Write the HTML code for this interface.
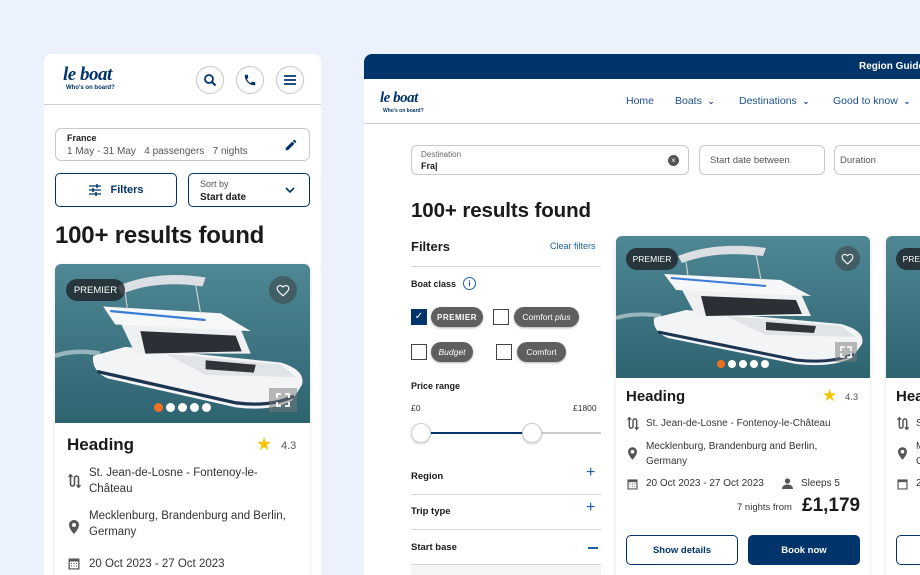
<!DOCTYPE html>
<html><head><meta charset="utf-8"><style>
*{box-sizing:border-box;margin:0;padding:0}
body{width:920px;height:575px;overflow:hidden;background:#ebf1fd;font-family:"Liberation Sans",sans-serif;color:#1a1a1a;position:relative}
.a{position:absolute}
.logo{font-family:"Liberation Serif",serif;font-style:italic;font-weight:bold;color:#00346b;letter-spacing:-0.5px}
.sub{font-size:6px;font-weight:bold;color:#00346b}
.circ{width:28px;height:28px;border:1px solid #c8c8c8;border-radius:50%;display:flex;align-items:center;justify-content:center}
.box{border:1px solid #c9c9c9;border-radius:6px;background:#fff}
.btn{border:1.2px solid #00346b;border-radius:5px}
.pill{background:#5f5f5f;color:#fff;border-radius:12px;font-size:9px;display:flex;align-items:center;justify-content:center;height:20px;box-shadow:0 1px 2px rgba(0,0,0,.3)}
.cb{width:16px;height:16px;border:1.2px solid #444;background:#fff}
.row{font-size:11px;color:#333;line-height:16px}
.hr{height:1px;background:#d6d6d6}
</style></head><body>
<svg width="0" height="0" style="position:absolute">
  <defs>
    <linearGradient id="wg" x1="0" y1="0" x2="0" y2="1"><stop offset="0" stop-color="#4f8795"/><stop offset="1" stop-color="#2e6370"/></linearGradient>
    <g id="boat">
      <rect width="254" height="142" fill="url(#wg)"/>
      <path d="M0 82 Q20 76 45 80" stroke="#d4e3e3" stroke-width="4" fill="none" opacity=".6"/>
      <path d="M38 82 L70 74 L225 88 Q250 95 246 108 L236 122 Q215 132 180 128 L52 102 Q36 95 38 82 Z" fill="#f3f4f5"/>
      <path d="M42 96 L180 124 Q215 128 238 118" stroke="#1c3550" stroke-width="3" fill="none"/>
      <path d="M110 80 L225 90 L240 101 L150 99 Z" fill="#e0e4e6"/>
      <path d="M150 86 L200 90 L198 97 L150 94 Z" fill="#30343a"/>
      <path d="M65 52 L185 58 L195 80 L80 80 Z" fill="#eef0f1"/>
      <path d="M85 60 L180 64 L186 78 L90 80 Z" fill="#2b3036"/>
      <path d="M48 38 L165 44 L195 60 L60 54 Z" fill="#f6f7f8"/>
      <path d="M55 42 L150 50" stroke="#3a7bd5" stroke-width="2"/>
      <path d="M70 26 L72 40 M140 18 L145 44" stroke="#ccc" stroke-width="1.2"/>
      <path d="M62 20 Q100 5 150 12 L147 20 Q100 14 66 27 Z" fill="#dcdfe3"/>
    </g>
  </defs>
</svg>

<!-- MOBILE -->
<div class="a" style="left:44px;top:54px;width:277px;height:521px;background:#fff;border-radius:8px 8px 0 0;overflow:hidden">
  <div class="a logo" style="left:19px;top:10px;font-size:19px">le boat</div>
  <div class="a sub" style="left:22px;top:31px">Who's on board?</div>
  <div class="a circ" style="left:152px;top:12px"><svg width="14" height="14" viewBox="0 0 14 14"><circle cx="6" cy="6" r="4" fill="none" stroke="#00346b" stroke-width="1.8"/><path d="M9 9l3.5 3.5" stroke="#00346b" stroke-width="2"/></svg></div>
  <div class="a circ" style="left:192px;top:12px"><svg width="14" height="14" viewBox="0 0 24 24"><path fill="#00346b" d="M6.6 10.8c1.4 2.8 3.8 5.1 6.6 6.6l2.2-2.2c.3-.3.7-.4 1-.2 1.1.4 2.3.6 3.6.6.6 0 1 .4 1 1V20c0 .6-.4 1-1 1C10.6 21 3 13.4 3 4c0-.6.4-1 1-1h3.5c.6 0 1 .4 1 1 0 1.3.2 2.5.6 3.6.1.3 0 .7-.2 1z"/></svg></div>
  <div class="a circ" style="left:232px;top:12px"><svg width="14" height="12" viewBox="0 0 14 12"><path d="M1 2h12M1 6h12M1 10h12" stroke="#00346b" stroke-width="1.8"/></svg></div>
  <div class="a hr" style="left:0;top:50px;width:277px;background:#ccc"></div>

  <div class="a box" style="left:11px;top:74px;width:255px;height:33px">
    <div class="a" style="left:11px;top:4px;font-size:9px;font-weight:bold">France</div>
    <div class="a" style="left:11px;top:17px;font-size:10px;color:#555">1 May - 31 May&nbsp;&nbsp; 4 passengers&nbsp;&nbsp; 7 nights</div>
    <svg class="a" style="left:228px;top:9px" width="14" height="14" viewBox="0 0 24 24"><path fill="#00346b" d="M3 17.2V21h3.8L17.8 9.9l-3.7-3.7zM20.7 7c.4-.4.4-1 0-1.4l-2.3-2.3c-.4-.4-1-.4-1.4 0l-1.8 1.8 3.7 3.7z"/></svg>
  </div>
  <div class="a btn" style="left:11px;top:119px;width:122px;height:34px;display:flex;align-items:center;justify-content:center;font-size:11px;font-weight:bold;color:#00346b">
    <svg width="14" height="12" viewBox="0 0 14 12" style="margin-right:8px"><path d="M1 2h12M1 6h12M1 10h12" stroke="#00346b" stroke-width="1.3"/><path d="M9 0v4M5 4v4M8 8v4" stroke="#00346b" stroke-width="1.5"/></svg>Filters</div>
  <div class="a btn" style="left:144px;top:119px;width:122px;height:34px">
    <div class="a" style="left:11px;top:5px;font-size:9px;color:#555">Sort by</div>
    <div class="a" style="left:11px;top:18px;font-size:10px;font-weight:bold">Start date</div>
    <svg class="a" style="left:96px;top:13px" width="10" height="7" viewBox="0 0 10 7"><path d="M1 1l4 4 4-4" fill="none" stroke="#00346b" stroke-width="1.6"/></svg>
  </div>
  <div class="a" style="left:11px;top:168px;font-size:24px;font-weight:bold;letter-spacing:-.2px">100+ results found</div>

  <div class="a" style="left:11px;top:210px;width:255px;height:320px;border-radius:6px;overflow:hidden;box-shadow:0 1px 4px rgba(0,0,0,.12)">
    <svg class="a" style="left:0;top:0" width="255" height="159" viewBox="0 0 254 142" preserveAspectRatio="none"><use href="#boat"/></svg>
    <div class="a" style="left:11px;top:15px;height:22px;width:59px;border-radius:11px;background:rgba(30,35,40,.8);color:#fff;font-size:9.5px;display:flex;align-items:center;justify-content:center">PREMIER</div>
    <div class="a" style="left:214px;top:12px;width:28px;height:28px;border-radius:50%;background:rgba(60,60,60,.5);display:flex;align-items:center;justify-content:center"><svg width="14" height="13" viewBox="0 0 24 22"><path d="M12 20l-1.5-1.3C5 13.8 2 11 2 7.5 2 4.7 4.2 2.5 7 2.5c1.7 0 3.2.8 5 2.5 1.8-1.7 3.3-2.5 5-2.5 2.8 0 5 2.2 5 5 0 3.5-3 6.3-8.5 11.2z" fill="none" stroke="#fff" stroke-width="2"/></svg></div>
    <div class="a" style="left:214px;top:124px;width:28px;height:24px;background:rgba(120,120,120,.5)"><svg width="28" height="24" viewBox="0 0 28 24"><path d="M8 10V6h4M16 6h4v4M20 14v4h-4M12 18H8v-4" fill="none" stroke="#fff" stroke-width="1.8"/></svg></div>
    <div class="a" style="left:99px;top:139px;display:flex;gap:3px"><i style="width:9px;height:9px;border-radius:50%;background:#f07020"></i><i style="width:9px;height:9px;border-radius:50%;background:#fff"></i><i style="width:9px;height:9px;border-radius:50%;background:#fff"></i><i style="width:9px;height:9px;border-radius:50%;background:#fff"></i><i style="width:9px;height:9px;border-radius:50%;background:#fff"></i></div>
    <div class="a" style="left:0;top:159px;width:255px;height:170px;background:#fff">
      <div class="a" style="left:12px;top:12px;font-size:17px;font-weight:bold">Heading</div>
      <div class="a" style="left:201px;top:11px;font-size:18px;color:#f5c400">★</div>
      <div class="a" style="left:226px;top:17px;font-size:11px;color:#555">4.3</div>
      <svg class="a" style="left:13px;top:51px" width="13" height="14" viewBox="0 0 13 14"><path d="M2.5 1v9a2 2 0 004 0V4a2 2 0 014 0v9" fill="none" stroke="#555" stroke-width="1.6"/><path d="M0.5 3L2.5 0.5 4.5 3M8.5 11l2 2.5 2-2.5" fill="none" stroke="#555" stroke-width="1.3"/></svg>
      <div class="a row" style="left:34px;top:42px;width:200px;font-size:11.5px">St. Jean-de-Losne - Fontenoy-le-Château</div>
      <svg class="a" style="left:14px;top:97px" width="10" height="14" viewBox="0 0 10 14"><path d="M5 0C2.2 0 0 2.2 0 5c0 3.7 5 9 5 9s5-5.3 5-9C10 2.2 7.8 0 5 0zm0 7a2 2 0 110-4 2 2 0 010 4z" fill="#555"/></svg>
      <div class="a row" style="left:34px;top:85px;width:210px;font-size:11.5px">Mecklenburg, Brandenburg and Berlin, Germany</div>
      <svg class="a" style="left:13px;top:134px" width="12" height="13" viewBox="0 0 12 13"><rect x="0.5" y="1.5" width="11" height="11" fill="#555"/><rect x="1.8" y="4.5" width="8.4" height="6.8" fill="#fff"/><path d="M3 6.5h1M5.5 6.5h1M8 6.5h1M3 9h1M5.5 9h1M8 9h1" stroke="#555"/></svg>
      <div class="a row" style="left:34px;top:133px;font-size:11.5px">20 Oct 2023 - 27 Oct 2023</div>
    </div>
  </div>
</div>

<!-- DESKTOP -->
<div class="a" style="left:364px;top:54px;width:556px;height:521px;background:#fff;border-radius:8px 0 0 0;overflow:hidden">
  <div class="a" style="left:0;top:0;width:556px;height:25px;background:#00346b"></div>
  <div class="a" style="left:495px;top:7px;font-size:10px;font-weight:bold;color:#fff;white-space:nowrap">Region Guide</div>
  <div class="a logo" style="left:16px;top:36px;font-size:15px">le boat</div>
  <div class="a sub" style="left:19px;top:54px;font-size:5px">Who's on board?</div>
  <div class="a" style="left:262px;top:41px;font-size:10.5px;white-space:nowrap;color:#1d4f8c">Home</div>
  <div class="a" style="left:311px;top:41px;font-size:10.5px;white-space:nowrap;color:#1d4f8c">Boats&nbsp;&nbsp;<b style="font-size:8px">⌄</b></div>
  <div class="a" style="left:375px;top:41px;font-size:10.5px;white-space:nowrap;color:#1d4f8c">Destinations&nbsp;&nbsp;<b style="font-size:8px">⌄</b></div>
  <div class="a" style="left:469px;top:41px;font-size:10.5px;white-space:nowrap;color:#1d4f8c">Good to know&nbsp;&nbsp;<b style="font-size:8px">⌄</b></div>
  <div class="a hr" style="left:0;top:69px;width:556px;background:#ccc"></div>

  <div class="a box" style="left:47px;top:91px;width:278px;height:30px">
    <div class="a" style="left:9px;top:4px;font-size:8px;color:#666">Destination</div>
    <div class="a" style="left:9px;top:15px;font-size:9px;font-weight:bold">Fra|</div>
    <div class="a" style="left:256px;top:9px;width:11px;height:11px;border-radius:50%;background:#555;color:#fff;font-size:8px;line-height:11px;text-align:center">×</div>
  </div>
  <div class="a box" style="left:335px;top:91px;width:126px;height:30px;font-size:9.5px;color:#555;padding:9px 0 0 10px">Start date between</div>
  <div class="a box" style="left:470px;top:91px;width:100px;height:30px;font-size:9.5px;color:#555;padding:9px 0 0 5px">Duration</div>

  <div class="a" style="left:47px;top:145px;font-size:20.5px;font-weight:bold;letter-spacing:-.1px">100+ results found</div>

  <div class="a" style="left:47px;top:185px;font-size:13px;font-weight:bold">Filters</div>
  <div class="a" style="left:186px;top:187px;font-size:9px;color:#1d5fa8">Clear filters</div>
  <div class="a hr" style="left:47px;top:212px;width:190px"></div>
  <div class="a" style="left:47px;top:225px;font-size:9px;font-weight:bold">Boat class</div>
  <div class="a" style="left:99px;top:223px;width:13px;height:13px;border:1.3px solid #1d5fa8;border-radius:50%;font-size:8px;color:#1d5fa8;text-align:center;line-height:11px;font-weight:bold">i</div>
  <div class="a" style="left:47px;top:255px;width:16px;height:16px;background:#00346b;color:#fff;font-size:10px;text-align:center;line-height:16px">✓</div>
  <div class="a pill" style="left:67px;top:253px;width:52px;font-weight:bold;letter-spacing:.5px;font-size:8px">PREMIER</div>
  <div class="a cb" style="left:129px;top:255px"></div>
  <div class="a pill" style="left:150px;top:253px;width:65px;font-size:8.5px">Comfort&nbsp;<i>plus</i></div>
  <div class="a cb" style="left:47px;top:290px"></div>
  <div class="a pill" style="left:67px;top:288px;width:42px;font-style:italic;font-size:8.5px">Budget</div>
  <div class="a cb" style="left:132px;top:290px"></div>
  <div class="a pill" style="left:153px;top:288px;width:49px;font-size:8.5px">Comfort</div>
  <div class="a" style="left:47px;top:327px;font-size:9px;font-weight:bold">Price range</div>
  <div class="a" style="left:47px;top:349px;font-size:8.5px;color:#333">£0</div>
  <div class="a" style="left:209px;top:349px;font-size:8.5px;color:#333">£1800</div>
  <div class="a" style="left:47px;top:378px;width:190px;height:2px;background:#ccc"></div>
  <div class="a" style="left:57px;top:378px;width:112px;height:2px;background:#00346b"></div>
  <div class="a" style="left:47px;top:369px;width:20px;height:20px;border-radius:50%;background:#fff;border:1px solid #ccc;box-shadow:0 1px 2px rgba(0,0,0,.2)"></div>
  <div class="a" style="left:158px;top:369px;width:20px;height:20px;border-radius:50%;background:#fff;border:1px solid #ccc;box-shadow:0 1px 2px rgba(0,0,0,.2)"></div>
  <div class="a" style="left:47px;top:417px;font-size:9.5px;font-weight:bold">Region</div>
  <div class="a" style="left:222px;top:410px;font-size:16px;color:#1d5fa8">+</div>
  <div class="a hr" style="left:47px;top:440px;width:190px"></div>
  <div class="a" style="left:47px;top:452px;font-size:9.5px;font-weight:bold">Trip type</div>
  <div class="a" style="left:222px;top:445px;font-size:16px;color:#1d5fa8">+</div>
  <div class="a hr" style="left:47px;top:475px;width:190px"></div>
  <div class="a" style="left:47px;top:488px;font-size:9.5px;font-weight:bold">Start base</div>
  <div class="a" style="left:224px;top:493px;width:10px;height:1.5px;background:#1d5fa8"></div>
  <div class="a hr" style="left:47px;top:510px;width:190px"></div>
  <div class="a" style="left:47px;top:511px;width:190px;height:10px;background:#f5f5f5"></div>

  <!-- card 1 -->
  <div class="a" style="left:252px;top:182px;width:254px;height:345px;border-radius:6px;overflow:hidden;box-shadow:0 1px 5px rgba(0,0,0,.12);background:#fff">
    <svg class="a" style="left:0;top:0" width="254" height="142" viewBox="0 0 254 142"><use href="#boat"/></svg>
    <div class="a" style="left:10px;top:12px;height:22px;width:52px;border-radius:11px;background:rgba(30,35,40,.8);color:#fff;font-size:8.5px;display:flex;align-items:center;justify-content:center">PREMIER</div>
    <div class="a" style="left:219px;top:10px;width:25px;height:25px;border-radius:50%;background:rgba(60,60,60,.5);display:flex;align-items:center;justify-content:center"><svg width="13" height="12" viewBox="0 0 24 22"><path d="M12 20l-1.5-1.3C5 13.8 2 11 2 7.5 2 4.7 4.2 2.5 7 2.5c1.7 0 3.2.8 5 2.5 1.8-1.7 3.3-2.5 5-2.5 2.8 0 5 2.2 5 5 0 3.5-3 6.3-8.5 11.2z" fill="none" stroke="#fff" stroke-width="2"/></svg></div>
    <div class="a" style="left:219px;top:106px;width:22px;height:20px;background:rgba(120,120,120,.5)"><svg width="22" height="20" viewBox="0 0 22 20"><path d="M6 9V5h4M12 5h4v4M16 11v4h-4M10 15H6v-4" fill="none" stroke="#fff" stroke-width="1.6"/></svg></div>
    <div class="a" style="left:101px;top:124px;display:flex;gap:3px"><i style="width:8px;height:8px;border-radius:50%;background:#f07020"></i><i style="width:8px;height:8px;border-radius:50%;background:#fff"></i><i style="width:8px;height:8px;border-radius:50%;background:#fff"></i><i style="width:8px;height:8px;border-radius:50%;background:#fff"></i><i style="width:8px;height:8px;border-radius:50%;background:#fff"></i></div>
    <div class="a" style="left:10px;top:152px;font-size:15px;font-weight:bold">Heading</div>
    <div class="a" style="left:206px;top:150px;font-size:17px;color:#f5c400">★</div>
    <div class="a" style="left:229px;top:156px;font-size:9.5px;color:#555">4.3</div>
    <svg class="a" style="left:11px;top:181px" width="12" height="13" viewBox="0 0 13 14"><path d="M2.5 1v9a2 2 0 004 0V4a2 2 0 014 0v9" fill="none" stroke="#555" stroke-width="1.6"/><path d="M0.5 3L2.5 0.5 4.5 3M8.5 11l2 2.5 2-2.5" fill="none" stroke="#555" stroke-width="1.3"/></svg>
    <div class="a row" style="left:30px;top:180px;font-size:10px;white-space:nowrap">St. Jean-de-Losne - Fontenoy-le-Château</div>
    <svg class="a" style="left:12px;top:211px" width="9" height="13" viewBox="0 0 10 14"><path d="M5 0C2.2 0 0 2.2 0 5c0 3.7 5 9 5 9s5-5.3 5-9C10 2.2 7.8 0 5 0zm0 7a2 2 0 110-4 2 2 0 010 4z" fill="#555"/></svg>
    <div class="a row" style="left:30px;top:203px;font-size:10px;width:190px;line-height:15px">Mecklenburg, Brandenburg and Berlin, Germany</div>
    <svg class="a" style="left:11px;top:242px" width="11" height="12" viewBox="0 0 12 13"><rect x="0.5" y="1.5" width="11" height="11" fill="#555"/><rect x="1.8" y="4.5" width="8.4" height="6.8" fill="#fff"/><path d="M3 6.5h1M5.5 6.5h1M8 6.5h1M3 9h1M5.5 9h1M8 9h1" stroke="#555"/></svg>
    <div class="a row" style="left:30px;top:240px;font-size:10px;white-space:nowrap">20 Oct 2023 - 27 Oct 2023</div>
    <svg class="a" style="left:166px;top:242px" width="11" height="11" viewBox="0 0 11 11"><circle cx="5.5" cy="3" r="2.6" fill="#555"/><path d="M0 11c0-3 2.5-4.5 5.5-4.5S11 8 11 11z" fill="#555"/></svg>
    <div class="a row" style="left:185px;top:240px;font-size:10px">Sleeps 5</div>
    <div class="a" style="left:121px;top:266px;font-size:9.5px;color:#333">7 nights from</div>
    <div class="a" style="left:186px;top:259px;font-size:19px;font-weight:bold">£1,179</div>
    <div class="a btn" style="left:10px;top:299px;width:112px;height:30px;font-size:9.5px;font-weight:bold;color:#00346b;display:flex;align-items:center;justify-content:center">Show details</div>
    <div class="a" style="left:132px;top:299px;width:112px;height:30px;border-radius:5px;background:#00346b;font-size:9.5px;font-weight:bold;color:#fff;display:flex;align-items:center;justify-content:center">Book now</div>
  </div>

  <!-- card 2 partial -->
  <div class="a" style="left:522px;top:182px;width:254px;height:345px;border-radius:6px;overflow:hidden;box-shadow:0 1px 5px rgba(0,0,0,.12);background:#fff">
    <div class="a" style="left:0;top:0;width:254px;height:142px;background:linear-gradient(#4f8795,#2e6370)"></div>
    <div class="a" style="left:10px;top:12px;height:22px;width:52px;border-radius:11px;background:rgba(30,35,40,.8);color:#fff;font-size:8.5px;display:flex;align-items:center;justify-content:center">PREMIER</div>
    <div class="a" style="left:10px;top:152px;font-size:15px;font-weight:bold">Heading</div>
    <svg class="a" style="left:11px;top:181px" width="12" height="13" viewBox="0 0 13 14"><path d="M2.5 1v9a2 2 0 004 0V4a2 2 0 014 0v9" fill="none" stroke="#555" stroke-width="1.6"/><path d="M0.5 3L2.5 0.5 4.5 3M8.5 11l2 2.5 2-2.5" fill="none" stroke="#555" stroke-width="1.3"/></svg>
    <div class="a row" style="left:30px;top:180px;font-size:10px">St.</div>
    <svg class="a" style="left:12px;top:211px" width="9" height="13" viewBox="0 0 10 14"><path d="M5 0C2.2 0 0 2.2 0 5c0 3.7 5 9 5 9s5-5.3 5-9C10 2.2 7.8 0 5 0zm0 7a2 2 0 110-4 2 2 0 010 4z" fill="#555"/></svg>
    <div class="a row" style="left:30px;top:203px;font-size:10px;line-height:15px">M<br>G</div>
    <svg class="a" style="left:11px;top:242px" width="11" height="12" viewBox="0 0 12 13"><rect x="0.5" y="1.5" width="11" height="11" fill="#555"/><rect x="1.8" y="4.5" width="8.4" height="6.8" fill="#fff"/></svg>
    <div class="a row" style="left:30px;top:240px;font-size:10px">2</div>
    <div class="a btn" style="left:10px;top:299px;width:112px;height:30px"></div>
  </div>
</div>
</body></html>
